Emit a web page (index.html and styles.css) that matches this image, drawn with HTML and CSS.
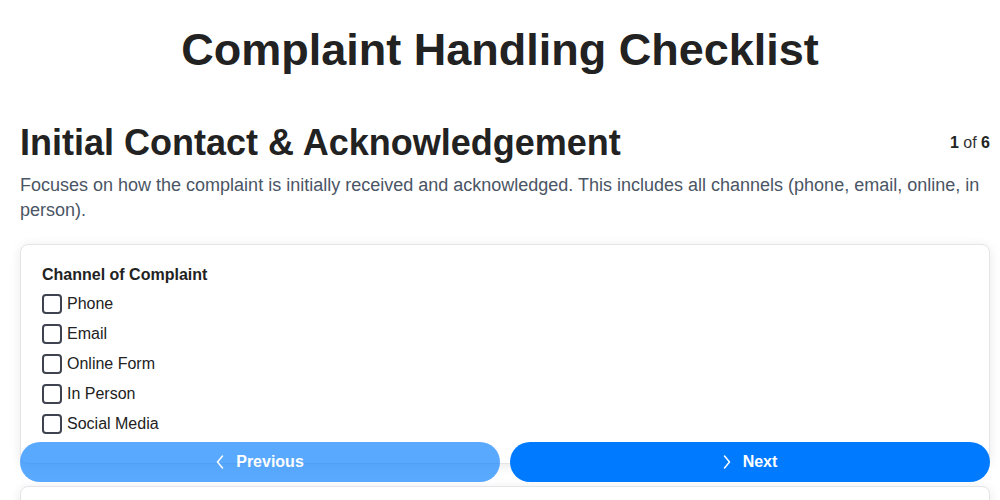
FILE: index.html
```html
<!DOCTYPE html>
<html lang="en">
<head>
<meta charset="utf-8">
<title>Complaint Handling Checklist</title>
<link rel="stylesheet" href="styles.css">
</head>
<body>
<main class="page">
  <h1 class="title">Complaint Handling Checklist</h1>

  <section class="step">
    <header class="step-head">
      <h2 class="step-title">Initial Contact &amp; Acknowledgement</h2>
      <span class="step-count"><b>1</b> of <b>6</b></span>
    </header>
    <p class="step-desc">Focuses on how the complaint is initially received and acknowledged. This includes all channels (phone, email, online, in person).</p>

    <div class="card">
      <h3 class="question">Channel of Complaint</h3>
      <ul class="options">
        <li><label class="option"><input type="checkbox" class="check"><span>Phone</span></label></li>
        <li><label class="option"><input type="checkbox" class="check"><span>Email</span></label></li>
        <li><label class="option"><input type="checkbox" class="check"><span>Online Form</span></label></li>
        <li><label class="option"><input type="checkbox" class="check"><span>In Person</span></label></li>
        <li><label class="option"><input type="checkbox" class="check"><span>Social Media</span></label></li>
      </ul>
    </div>

    <div class="card">
      <h3 class="question">Acknowledgement Sent Within 24 Hours?</h3>
      <ul class="options">
        <li><label class="option"><input type="checkbox" class="check"><span>Yes</span></label></li>
        <li><label class="option"><input type="checkbox" class="check"><span>No</span></label></li>
      </ul>
    </div>
  </section>

  <nav class="step-nav">
    <button class="nav-btn prev" disabled>
      <svg class="chev" viewBox="0 0 8 14" width="8" height="14"><path d="M6.5 1 1.5 7l5 6" fill="none" stroke="currentColor" stroke-width="1.5" stroke-linecap="round" stroke-linejoin="round"/></svg>
      <span>Previous</span>
    </button>
    <button class="nav-btn next">
      <svg class="chev" viewBox="0 0 8 14" width="8" height="14"><path d="M1.5 1l5 6-5 6" fill="none" stroke="currentColor" stroke-width="1.5" stroke-linecap="round" stroke-linejoin="round"/></svg>
      <span>Next</span>
    </button>
  </nav>
</main>
</body>
</html>
```

FILE: styles.css
```css
html {
  scrollbar-width: none;
}
html::-webkit-scrollbar {
  display: none;
}

body {
  margin: 0;
  background: #fff;
  color: #222;
  font-family: "Liberation Sans", Arial, sans-serif;
}

.page {
  padding: 20px 10px 80px 20px;
}

/* the page title is centred on the full window width */
.title {
  margin: 4px -10px 47px -20px;
  font-size: 45px;
  line-height: 52px;
  font-weight: 700;
  text-align: center;
  color: #222;
}

.step-head {
  display: flex;
  align-items: center;
  justify-content: space-between;
}

.step-title {
  margin: 0;
  font-size: 36px;
  line-height: 40px;
  font-weight: 700;
  color: #222;
}

.step-count {
  font-size: 16px;
  color: #333;
}
.step-count b {
  color: #222;
}

.step-desc {
  margin: 10px 0 21px;
  font-size: 18px;
  line-height: 25px;
  color: #4a5565;
}

.card {
  background: #fff;
  border: 1px solid #e4e5e9;
  border-radius: 8px;
  box-shadow: 0 2px 12px rgba(0, 0, 0, 0.09);
  padding: 21px 20px 24px 21px;
  margin-bottom: 22px;
}

.question {
  margin: 0 0 5px;
  font-size: 16px;
  line-height: 18px;
  font-weight: 700;
  color: #222;
}

.options {
  list-style: none;
  margin: 0;
  padding: 0;
}

.option {
  display: flex;
  align-items: center;
  gap: 5px;
  height: 30px;
  font-size: 16px;
  color: #222;
  cursor: pointer;
}

.check {
  appearance: none;
  -webkit-appearance: none;
  margin: 0;
  width: 20px;
  height: 20px;
  border: 2px solid #3f4350;
  border-radius: 4px;
  background: #fff;
}

.step-nav {
  position: fixed;
  left: 20px;
  right: 10px;
  bottom: 18px;
  display: grid;
  grid-template-columns: 1fr 1fr;
  gap: 10px;
}

.nav-btn {
  display: flex;
  align-items: center;
  justify-content: center;
  gap: 12px;
  height: 40px;
  border: none;
  border-radius: 20px;
  background: #007bff;
  color: #fff;
  font-family: "Liberation Sans", Arial, sans-serif;
  font-size: 16px;
  font-weight: 700;
  cursor: pointer;
}

.nav-btn.prev {
  opacity: 0.65;
  cursor: default;
}

.chev {
  display: block;
}
```
